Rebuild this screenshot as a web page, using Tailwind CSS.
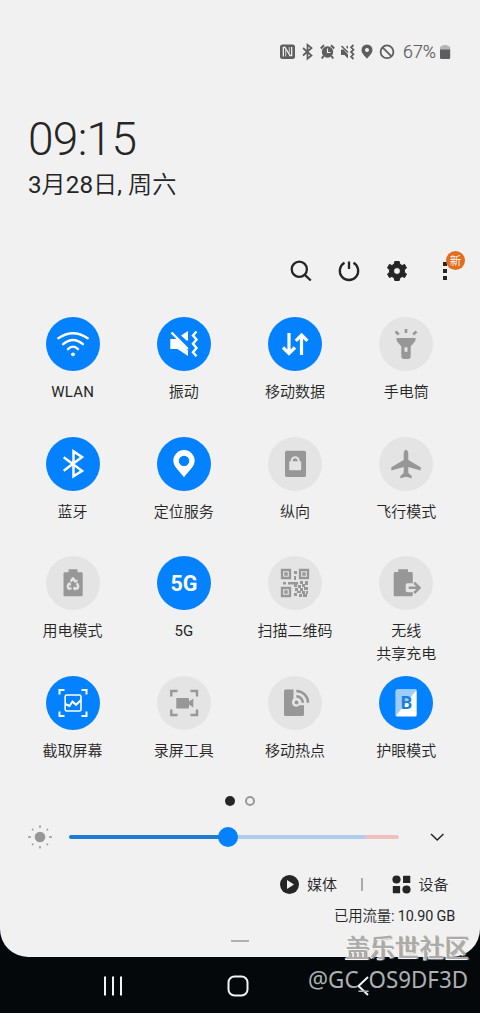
<!DOCTYPE html>
<html lang="zh-CN">
<head>
<meta charset="utf-8">
<title>快捷面板</title>
<script src="https://cdn.jsdelivr.net/npm/@tailwindcss/browser@4"></script>
</head>
<body class="bg-[#04080a]">
<div class="relative w-[480px] h-[1013px] overflow-hidden flex flex-col font-[Roboto,'Noto_Sans_CJK_SC',sans-serif] font-[350] text-[#252525]">
<main class="h-[957px] shrink-0 bg-[#f1f1f1] rounded-b-[28px] flex flex-col">

  <!-- status bar -->
  <header class="h-[70px] pt-[34px] pl-[279px] flex items-center shrink-0 text-[#5e5e5e]">
    <svg class="w-[174px] h-9" viewBox="279 34 174 36" fill="none" stroke="currentColor" stroke-width="1.6">
      <rect x="280" y="44.500" width="15" height="14.500" rx="2.500" fill="currentColor" stroke="none"/>
      <path d="M283.300 56.500V47.500H285L290 55.500H291.700V47" stroke="#f1f1f1" stroke-width="1.300"/><path d="M285.700 49.500V56.500M289.300 47V53" stroke="#f1f1f1" stroke-width=".8"/>
      <path d="M303 48L311.500 55.500L307.500 58.700V44.800L311.500 48L303 55.500" stroke-width="1.700"/>
      <circle cx="327.500" cy="52" r="5.700" fill="currentColor" stroke="none"/>
      <path d="M320.800 48.500L324 45.300M334.200 48.500L331 45.300M323.500 56L321.800 58.500M331.500 56L333.200 58.500" stroke-width="2"/>
      <path d="M327.500 48.500V52.500H330.500" stroke="#f1f1f1" stroke-width="1.200"/>
      <path d="M341 49.500H343.500L348 54.500V58.500L344.500 55H341ZM346 47L348 45.300V49Z" fill="currentColor" stroke="none"/>
      <path d="M341.500 46L348 52.500" stroke-width="1.600"/>
      <path d="M353.500 45L351 47.300L353.500 49.700L351 52L353.500 54.300L351 56.700L353.500 59" stroke-width="1.700"/>
      <path fill-rule="evenodd" fill="currentColor" stroke="none" d="M367 44.500a5.500 5.500 0 0 1 5.500 5.500C372.500 53.500 369 56 367 58.800C365 56 361.500 53.500 361.500 50A5.500 5.500 0 0 1 367 44.500ZM367 48a2 2 0 1 0 .01 0Z"/>
      <circle cx="387" cy="51.800" r="6.400" stroke-width="1.800"/>
      <path d="M382.500 47.300L391.500 56.300" stroke-width="1.800"/>
      <text x="403" y="58.300" font-size="17.500" font-weight="300" textLength="33" lengthAdjust="spacingAndGlyphs" fill="currentColor" stroke="currentColor" stroke-width=".2">67%</text>
      <path d="M440 50V47.500Q440 46.300 441.200 46.300H442.500V45H447.500V46.300H449Q450.200 46.300 450.200 47.500V50Z" fill="#b5b5b5" stroke="none"/>
      <path d="M440 49.500H450.200V58Q450.200 59 449 59H441.200Q440 59 440 58Z" fill="currentColor" stroke="none"/>
    </svg>
  </header>

  <!-- clock -->
  <section class="h-[175px] shrink-0 pt-[42px] pl-[28px]">
    <div class="h-[54px] leading-[54px] text-[46px] font-light tracking-[-0.7px]">09:15</div>
    <div class="h-[36px] leading-[38px] text-[24.200px] whitespace-nowrap"><span class="font-normal">3</span>月<span class="font-normal">28</span>日<span class="font-normal">, </span>周六</div>
  </section>

  <!-- toolbar -->
  <nav class="h-[72px] shrink-0 pl-[288px] pt-[5px]">
    <svg class="w-[192px] h-[40px]" viewBox="288 250 192 40" fill="none" stroke="#252525" stroke-width="2.300">
      <circle cx="299.300" cy="269.300" r="7.600"/><path d="M304.800 274.800L310.800 280.500"/>
      <path d="M344.500 262.800A9.200 9.200 0 1 0 353.500 262.800M349 261.500V269"/>
      <path fill-rule="evenodd" fill="#252525" stroke-width="1" stroke-linejoin="round" d="M394.800 261.500H399.200L399.900 264.300L402.100 265.500L404.600 264.400L406.500 268L404.400 269.800V272.200L406.500 274L404.600 277.500L402.100 276.500L399.900 277.800L399.200 280.500H394.800L394.100 277.800L391.900 276.500L389.400 277.500L387.500 274L389.600 272.200V269.800L387.500 268L389.400 264.400L391.900 265.500L394.100 264.300ZM397 267.600A3.400 3.400 0 1 0 397.010 267.600Z"/>
      <path d="M443 262h4v4h-4zM443 269h4v4h-4zM443 276h4v4h-4z" fill="#252525" stroke="none"/>
      <circle cx="455.500" cy="260.500" r="9.500" fill="#e36e20" stroke="none"/>
      <text x="455.500" y="264.800" text-anchor="middle" font-size="11.500" fill="#fff" stroke="none">新</text>
    </svg>
  </nav>

  <!-- quick setting tiles -->
  <section class="ml-[17px] w-[445px] h-[473px] shrink-0 grid grid-cols-4 auto-rows-[119.700px] text-[15px] leading-[23px] text-center">
    <div class="flex flex-col items-center gap-[10px]">
      <svg class="size-[54px] shrink-0" viewBox="-27 -27 54 54" fill="none" stroke="#fff" stroke-width="2.400"><circle r="27" fill="#0381fe" stroke="none"/><path stroke-linecap="round" d="M-14.700 -5.800Q0 -15.800 14.700 -5.800M-9.900 .2Q0 -8.200 9.900 .2M-5 5.200Q0 0 5 5.200"/><circle cy="10.300" r="1.900" fill="#fff" stroke="none"/></svg>
      <span class="font-normal tracking-[0.2px]">WLAN</span>
    </div>
    <div class="flex flex-col items-center gap-[10px]">
      <svg class="size-[54px] shrink-0" viewBox="-27 -27 54 54" fill="none" stroke="#fff" stroke-width="2.400"><circle r="27" fill="#0381fe" stroke="none"/><path fill="#fff" stroke="none" d="M-13.700 -5H-7.500L4 6.500V12L-6.500 5H-13.700ZM-3 -8.500L4 -13V-3.500L2.500 -3.500Z"/><path d="M-12.500 -11.500L3.800 5M12.500 -12.500L9 -8.500L12.500 -4.500L9 -.3L12.500 4L9 8.200L12.500 12.300"/></svg>
      <span>振动</span>
    </div>
    <div class="flex flex-col items-center gap-[10px]">
      <svg class="size-[54px] shrink-0" viewBox="-27 -27 54 54" fill="none" stroke="#fff" stroke-width="3.200"><circle r="27" fill="#0381fe" stroke="none"/><path d="M-6 -11V9M-12 3.500L-6 9.500L0 3.500M6.500 11V-8.500M.8 -3.200L6.600 -9L12.400 -3.200"/></svg>
      <span>移动数据</span>
    </div>
    <div class="flex flex-col items-center gap-[10px]">
      <svg class="size-[54px] shrink-0" viewBox="-27 -27 54 54" fill="none" stroke="#979797" stroke-width="2.600"><circle r="27" fill="#e4e4e4" stroke="none"/><path d="M0 -15V-11M-10.500 -12.500L-7.200 -9.500M10.500 -12.500L7.200 -9.500"/><path fill="#979797" stroke="none" fill-rule="evenodd" d="M-9.500 -6H9.500V-4Q9.500 -2.500 4.700 2.300V12Q4.700 15 2 15H-2Q-4.700 15 -4.700 12V2.300Q-9.500 -2.500 -9.500 -4ZM-1.500 3.200V7.800H1.500V3.200Z"/></svg>
      <span>手电筒</span>
    </div>

    <div class="flex flex-col items-center gap-[10px]">
      <svg class="size-[54px] shrink-0" viewBox="-27 -27 54 54" fill="none" stroke="#fff" stroke-width="2.500"><circle r="27" fill="#0381fe" stroke="none"/><path d="M-9.300 -6.800L9 6.800L.5 12.200V-12.600L9 -7L-9.300 6.800"/></svg>
      <span>蓝牙</span>
    </div>
    <div class="flex flex-col items-center gap-[10px]">
      <svg class="size-[54px] shrink-0" viewBox="-27 -27 54 54"><circle r="27" fill="#0381fe"/><path fill="#fff" fill-rule="evenodd" d="M0 -14A10.700 10.700 0 0 1 10.700 -3.300C10.700 2.500 4.500 7 0 13.300C-4.500 7 -10.700 2.500 -10.700 -3.300A10.700 10.700 0 0 1 0 -14ZM0 -8.300A5.200 5.200 0 1 0 .01 -8.300Z"/></svg>
      <span>定位服务</span>
    </div>
    <div class="flex flex-col items-center gap-[10px]">
      <svg class="size-[54px] shrink-0" viewBox="-27 -27 54 54"><circle r="27" fill="#e4e4e4"/><rect x="-10" y="-13.200" width="21" height="26.200" rx="1.800" fill="#979797"/><rect x="-5.800" y="-2.700" width="12" height="8.900" rx=".8" fill="#e4e4e4"/><path d="M-3.300 -2V-3.200A3.500 3.500 0 0 1 3.700 -3.200V-2" fill="none" stroke="#e4e4e4" stroke-width="2"/></svg>
      <span>纵向</span>
    </div>
    <div class="flex flex-col items-center gap-[10px]">
      <svg class="size-[54px] shrink-0" viewBox="-27 -27 54 54"><circle r="27" fill="#e4e4e4"/><path fill="#979797" d="M0 -14.300Q2.300 -13.500 2.300 -10V-4L14.700 3.200V6.500L2.300 3V9L5.700 12V14.300L0 12.800L-5.700 14.300V12L-2.300 9V3L-14.700 6.500V3.200L-2.300 -4V-10Q-2.300 -13.500 0 -14.300Z"/></svg>
      <span>飞行模式</span>
    </div>

    <div class="flex flex-col items-center gap-[10px]">
      <svg class="size-[54px] shrink-0" viewBox="-27 -27 54 54"><circle r="27" fill="#e4e4e4"/><path fill="#979797" d="M-9.500 -9.500Q-9.500 -10.800 -8.300 -10.800H-4.500V-13.800H4.500V-10.800H8.500Q9.700 -10.800 9.700 -9.500V12Q9.700 13.300 8.500 13.300H-8.300Q-9.500 13.300 -9.500 12Z"/><path d="M-2.300 -1.500L0 -4.800L2.300 -1.500M3.800 .2L5.300 3.200L4.500 5.500H1.500M-1.500 5.500H-4.500L-5.300 3.200L-3.500 .2" fill="none" stroke="#e4e4e4" stroke-width="2.400" stroke-linejoin="round"/><path fill="#e4e4e4" d="M.8 -.5H4.500V-4ZM2.200 2.800V8L-.3 5.500ZM-6 1L-2.500 -1L-1.800 2.700Z"/></svg>
      <span>用电模式</span>
    </div>
    <div class="flex flex-col items-center gap-[10px]">
      <svg class="size-[54px] shrink-0" viewBox="-27 -27 54 54"><circle r="27" fill="#0381fe"/><text x="0" y="8.200" text-anchor="middle" font-size="21.500" font-weight="700" fill="#fff">5G</text></svg>
      <span class="font-normal">5G</span>
    </div>
    <div class="flex flex-col items-center gap-[10px]">
      <svg class="size-[54px] shrink-0" viewBox="-27 -27 54 54"><circle r="27" fill="#e4e4e4"/><g fill="none" stroke="#979797" stroke-width="2.300"><path d="M-13 -13h8v8h-8zM5 -13h8v8h-8zM-13 5h8v8h-8z"/></g><path fill="#979797" d="M-10.700 -10.700h3.400v3.400h-3.400zM7.300 -10.700h3.400v3.400h-3.400zM-10.700 7.300h3.400v3.400h-3.400zM-1 -12h3v3h-3zM-1 -7h2v4h-2zM-12 -1h3v2.500h-3zM-7 -1h10v2.500h-10zM5 -2h3v3h-3zM10 -2h3v4h-3zM-1 1h3v3h-3zM3 2h3v3h-3zM7 1h3v3h-3zM0 5h3v3h-3zM5 5h3v3h-3zM9 4h4v3h-4zM2 8h4v2h-4zM7 8h3v3h-3zM11 8h2v3h-2zM-1 10h3v3h-3zM4 11h3v3h-3zM8 11h4v3h-4z"/></svg>
      <span>扫描二维码</span>
    </div>
    <div class="flex flex-col items-center gap-[10px]">
      <svg class="size-[54px] shrink-0" viewBox="-27 -27 54 54"><circle r="27" fill="#e4e4e4"/><path fill="#979797" d="M-12.300 -9.500Q-12.300 -11 -11 -11H-7.700V-13.800H2V-11H5.500Q6.800 -11 6.800 -9.500V.3H1.500Q-.3 .3 -.3 2V7.500Q-.3 9.300 1.500 9.300H6.800V12Q6.800 13.300 5.500 13.300H-11Q-12.300 13.300 -12.300 12Z"/><path d="M2.700 4.800H13M8.200 -.4L13.400 4.800L8.200 10" fill="none" stroke="#979797" stroke-width="2.600"/></svg>
      <span class="whitespace-nowrap">无线<br>共享充电</span>
    </div>

    <div class="flex flex-col items-center gap-[10px]">
      <svg class="size-[54px] shrink-0" viewBox="-27 -27 54 54" fill="none" stroke="#fff" stroke-width="2"><circle r="27" fill="#0381fe" stroke="none"/><path d="M-13.500 -8.500V-13H-8.500M8.500 -13H13.500V-8.500M13.500 8.500V13H8.500M-8.500 13H-13.500V8.500M-7.700 1L-3.500 3L-.5 -1.500L3 1.800L8 -3" stroke-width="2"/><rect x="-7.800" y="-8" width="15.800" height="16" rx="1.500" stroke-width="1.600"/></svg>
      <span>截取屏幕</span>
    </div>
    <div class="flex flex-col items-center gap-[10px]">
      <svg class="size-[54px] shrink-0" viewBox="-27 -27 54 54" fill="none" stroke="#979797" stroke-width="2.400"><circle r="27" fill="#e4e4e4" stroke="none"/><path d="M-12.700 -6.500V-12H-6.500M6.500 -12H13V-6.500M13 6.500V12H6.500M-6.500 12H-12.700V6.500"/><path fill="#979797" stroke="none" d="M-7.700 -5H4Q5 -5 5 -4V-1.500L9.300 -4.500V4.500L5 1.500V4.500Q5 5.500 4 5.500H-7.700Z"/></svg>
      <span>录屏工具</span>
    </div>
    <div class="flex flex-col items-center gap-[10px]">
      <svg class="size-[54px] shrink-0" viewBox="-27 -27 54 54" fill="none" stroke="#979797" stroke-width="2.500"><circle r="27" fill="#e4e4e4" stroke="none"/><path fill="#979797" stroke="none" d="M-11 -12Q-11 -13.500 -9.500 -13.500H-1.500V-4.500Q-3.500 -2.500 -3 0Q-2 4 1.500 3.700Q3.500 3.500 4.500 2.200H9V11.500Q9 13 7.500 13H-9.500Q-11 13 -11 11.500Z"/><circle cx="1.500" cy="-.5" r="1.900" fill="#979797" stroke="none"/><path d="M1.300 -6.800A6.500 6.500 0 0 1 7.800 -.3M1.300 -12A11.700 11.700 0 0 1 13 -.3"/></svg>
      <span>移动热点</span>
    </div>
    <div class="flex flex-col items-center gap-[10px]">
      <svg class="size-[54px] shrink-0" viewBox="-27 -27 54 54"><circle r="27" fill="#0381fe"/><rect x="-10.300" y="-13.500" width="21" height="27" rx="1.500" fill="#fff"/><path d="M-8.800 -13.500H10.700L-10.300 13V-12Q-10.300 -13.500 -8.800 -13.500Z" fill="#9bcdff"/><text x=".5" y="6" text-anchor="middle" font-size="18" font-weight="700" fill="#197fda">B</text></svg>
      <span>护眼模式</span>
    </div>
  </section>

  <!-- page dots -->
  <div class="h-[22px] shrink-0 flex items-center justify-center gap-[10px]">
    <i class="size-[10px] rounded-full bg-[#252525]"></i>
    <i class="size-[9.500px] rounded-full border-2 border-[#999]"></i>
  </div>

  <!-- brightness -->
  <div class="h-[49px] shrink-0 pl-[27px] flex items-center">
    <svg class="w-[26px] h-[26px] shrink-0" viewBox="-13 -13 26 26" fill="#979797"><circle r="5.300"/><g stroke="#979797" stroke-width="1.500"><path d="M0 -11.500V-9M0 9V11.500M-12 0H-9M9 0H12M-8 -8L-6.700 -6.700M8 -8L6.700 -6.700M-8 8L-6.700 6.700M8 8L6.700 6.700"/></g></svg>
    <div class="ml-4 w-[330px] h-[20px] flex items-center relative shrink-0">
      <span class="w-[159px] h-1 bg-[#1c7bd3] rounded-l-full"></span>
      <span class="w-[137px] h-1 bg-[#afcdea]"></span>
      <span class="w-[34px] h-1 bg-[#efc0c0] rounded-r-full"></span>
      <i class="absolute left-[149px] size-[20px] rounded-full bg-[#0381fe]"></i>
    </div>
    <svg class="ml-[30px] w-[16px] h-[12px]" viewBox="0 0 16 12" fill="none" stroke="#252525" stroke-width="1.500"><path d="M2 3L8.200 9L14.400 3"/></svg>
  </div>

  <!-- media and devices -->
  <div class="h-[47px] shrink-0 pl-[280px] flex items-center text-[15px]">
    <svg class="w-[19px] h-[19px]" viewBox="0 0 19 19"><circle cx="9.500" cy="9.500" r="9.500" fill="#252525"/><path d="M7 5L14 9.500L7 14Z" fill="#f1f1f1"/></svg>
    <span class="ml-2 pt-[2px]">媒体</span>
    <i class="ml-[24px] w-[1.500px] h-[13px] bg-[#aaa]"></i>
    <svg class="ml-[29px] w-[19px] h-[19px]" viewBox="0 0 19 19" fill="#252525"><circle cx="4.500" cy="4.500" r="4.100"/><rect x="11" y=".8" width="7.300" height="7.300" rx=".6"/><rect x=".8" y="11" width="7.300" height="7.300" rx=".6"/><circle cx="14.500" cy="14.500" r="4.100"/></svg>
    <span class="ml-[8px] pt-[2px]">设备</span>
  </div>
  <div class="h-[18px] leading-[18px] shrink-0 pr-[25px] text-right text-[14.400px] tracking-[-0.150px]">已用流量<span class="font-normal">: 10.90 GB</span></div>
  <div class="flex-1 flex justify-center pt-[14px]"><i class="w-[18px] h-[2px] bg-[#b0b0b0]"></i></div>
</main>

<!-- navigation bar -->
<footer class="h-[56px] pt-[2px] flex items-center pl-[103px]">
  <svg class="w-[20px] h-[20px]" viewBox="0 0 20 20" stroke="#f3f3f3" stroke-width="2"><path d="M2 .5V19.500M10 .5V19.500M18 .5V19.500"/></svg>
  <svg class="ml-[104px] w-[22px] h-[22px]" viewBox="0 0 22 22" fill="none" stroke="#f3f3f3" stroke-width="2"><rect x="1.500" y="1.500" width="19" height="19" rx="6"/></svg>
  <svg class="ml-[107px] w-[14px] h-[20px]" viewBox="0 0 14 20" fill="none" stroke="#f3f3f3" stroke-width="2"><path d="M12 1L2.500 10L12 19"/></svg>
</footer>

<!-- community watermark -->
<div class="absolute left-[345px] top-[929px] h-[34px] leading-[34px] whitespace-nowrap font-['Noto_Sans_CJK_SC',sans-serif] text-[24.800px] font-medium text-[#ababab] [text-shadow:-1px_1px_0_#f6f6f6,1px_1px_1px_#999]">盖乐世社区</div>
<svg class="absolute left-[300px] top-[964px] w-[180px] h-[36px]" viewBox="300 964 180 36">
  <text x="308" y="987.500" font-family="Noto Sans, sans-serif" font-size="23" font-weight="400" fill="#aeb0b1" textLength="160" lengthAdjust="spacingAndGlyphs">@GC_OS9DF3D</text>
</svg>
</div>
</body>
</html>
